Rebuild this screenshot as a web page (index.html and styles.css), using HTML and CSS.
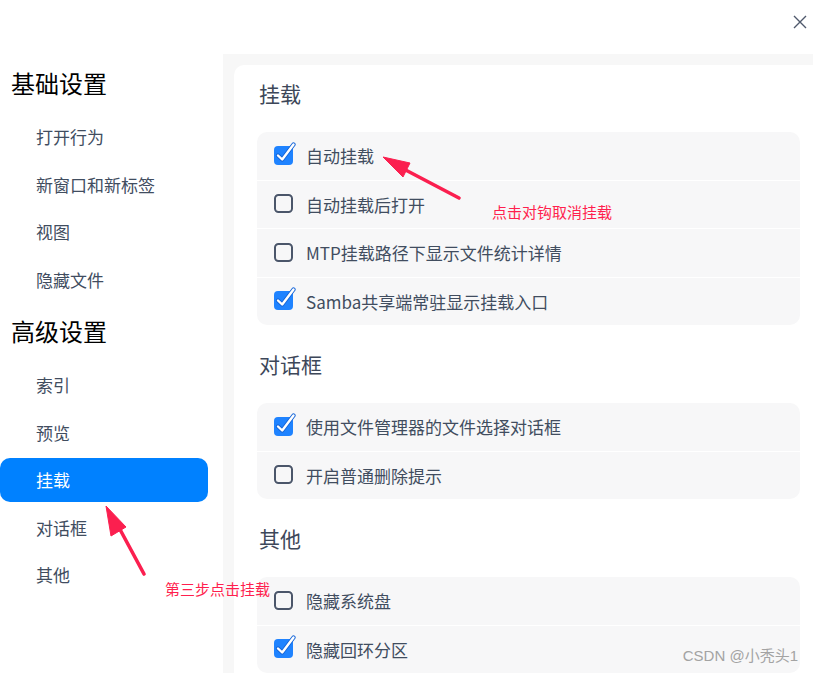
FILE: index.html
```html
<!DOCTYPE html>
<html lang="zh-CN">
<head>
<meta charset="utf-8">
<title>设置</title>
<link rel="stylesheet" href="styles.css">
</head>
<body>
<div class="window">
  <div class="titlebar">
    <button class="close" aria-label="关闭">
      <svg width="14" height="14" viewBox="0 0 14 14"><path d="M1 1 L13 13 M13 1 L1 13" stroke="#4f596c" stroke-width="1.4" fill="none"/></svg>
    </button>
  </div>
  <div class="content">
    <nav class="sidebar">
      <div class="nav-group">
        <div class="nav-title">基础设置</div>
        <div class="nav-items">
          <div class="nav-item">打开行为</div>
          <div class="nav-item">新窗口和新标签</div>
          <div class="nav-item">视图</div>
          <div class="nav-item">隐藏文件</div>
        </div>
      </div>
      <div class="nav-group">
        <div class="nav-title">高级设置</div>
        <div class="nav-items">
          <div class="nav-item">索引</div>
          <div class="nav-item">预览</div>
          <div class="nav-item active">挂载</div>
          <div class="nav-item">对话框</div>
          <div class="nav-item">其他</div>
        </div>
      </div>
    </nav>
    <main class="main">
      <div class="panel">
        <section class="section">
          <h2 class="section-title">挂载</h2>
          <div class="card">
            <div class="row"><span class="cb checked"><svg width="23" height="24" viewBox="0 0 23 24"><rect x="1" y="4" width="19" height="19" rx="4" fill="#1f83ff"/><path d="M5 13.5 L9.2 17.5 L20.5 2.5" stroke="#1565d8" stroke-width="4.2" fill="none" stroke-linecap="round" stroke-linejoin="round"/><path d="M5 13.5 L9.2 17.5 L20.5 2.5" stroke="#fff" stroke-width="2.4" fill="none" stroke-linecap="round" stroke-linejoin="round"/></svg></span><span class="label">自动挂载</span></div>
            <div class="row"><span class="cb"><svg width="23" height="24" viewBox="0 0 23 24"><rect x="2" y="5" width="17" height="17" rx="3.5" fill="none" stroke="#4b566a" stroke-width="2"/></svg></span><span class="label">自动挂载后打开</span></div>
            <div class="row"><span class="cb"><svg width="23" height="24" viewBox="0 0 23 24"><rect x="2" y="5" width="17" height="17" rx="3.5" fill="none" stroke="#4b566a" stroke-width="2"/></svg></span><span class="label">MTP挂载路径下显示文件统计详情</span></div>
            <div class="row"><span class="cb checked"><svg width="23" height="24" viewBox="0 0 23 24"><rect x="1" y="4" width="19" height="19" rx="4" fill="#1f83ff"/><path d="M5 13.5 L9.2 17.5 L20.5 2.5" stroke="#1565d8" stroke-width="4.2" fill="none" stroke-linecap="round" stroke-linejoin="round"/><path d="M5 13.5 L9.2 17.5 L20.5 2.5" stroke="#fff" stroke-width="2.4" fill="none" stroke-linecap="round" stroke-linejoin="round"/></svg></span><span class="label">Samba共享端常驻显示挂载入口</span></div>
          </div>
        </section>
        <section class="section">
          <h2 class="section-title">对话框</h2>
          <div class="card">
            <div class="row"><span class="cb checked"><svg width="23" height="24" viewBox="0 0 23 24"><rect x="1" y="4" width="19" height="19" rx="4" fill="#1f83ff"/><path d="M5 13.5 L9.2 17.5 L20.5 2.5" stroke="#1565d8" stroke-width="4.2" fill="none" stroke-linecap="round" stroke-linejoin="round"/><path d="M5 13.5 L9.2 17.5 L20.5 2.5" stroke="#fff" stroke-width="2.4" fill="none" stroke-linecap="round" stroke-linejoin="round"/></svg></span><span class="label">使用文件管理器的文件选择对话框</span></div>
            <div class="row"><span class="cb"><svg width="23" height="24" viewBox="0 0 23 24"><rect x="2" y="5" width="17" height="17" rx="3.5" fill="none" stroke="#4b566a" stroke-width="2"/></svg></span><span class="label">开启普通删除提示</span></div>
          </div>
        </section>
        <section class="section">
          <h2 class="section-title">其他</h2>
          <div class="card">
            <div class="row"><span class="cb"><svg width="23" height="24" viewBox="0 0 23 24"><rect x="2" y="5" width="17" height="17" rx="3.5" fill="none" stroke="#4b566a" stroke-width="2"/></svg></span><span class="label">隐藏系统盘</span></div>
            <div class="row"><span class="cb checked"><svg width="23" height="24" viewBox="0 0 23 24"><rect x="1" y="4" width="19" height="19" rx="4" fill="#1f83ff"/><path d="M5 13.5 L9.2 17.5 L20.5 2.5" stroke="#1565d8" stroke-width="4.2" fill="none" stroke-linecap="round" stroke-linejoin="round"/><path d="M5 13.5 L9.2 17.5 L20.5 2.5" stroke="#fff" stroke-width="2.4" fill="none" stroke-linecap="round" stroke-linejoin="round"/></svg></span><span class="label">隐藏回环分区</span></div>
          </div>
        </section>
      </div>
    </main>
  </div>

  <svg class="arrows" width="813" height="673" viewBox="0 0 813 673">
    <g fill="#fb1f4f" stroke="#fb1f4f">
      <line x1="459" y1="198" x2="398" y2="166" stroke-width="3.6" stroke-linecap="round"/>
      <polygon points="383,157 410,163 403,177" stroke-width="1" stroke-linejoin="round"/>
      <line x1="144" y1="574" x2="116" y2="522" stroke-width="3.6" stroke-linecap="round"/>
      <polygon points="106,506 126,527 111,536" stroke-width="1" stroke-linejoin="round"/>
    </g>
  </svg>
  <div class="note note-1">点击对钩取消挂载</div>
  <div class="note note-2">第三步点击挂载</div>
  <div class="watermark">CSDN @小秃头1</div>
</div>
</body>
</html>
```

FILE: styles.css
```css
* { box-sizing: border-box; }
html, body { margin: 0; padding: 0; background: #fff; }
body {
  font-family: "Noto Sans CJK SC", "Noto Sans", sans-serif;
  color: #414d5f;
}
.window {
  position: relative;
  width: 813px;
  height: 673px;
  overflow: hidden;
  display: flex;
  flex-direction: column;
  background: #fff;
}
.titlebar {
  height: 54px;
  flex: none;
  display: flex;
  justify-content: flex-end;
  align-items: flex-start;
}
.close {
  width: 20px;
  height: 44px;
  padding: 0;
  margin: 0 3px 0 0;
  border: 0;
  background: transparent;
  display: flex;
  align-items: center;
  justify-content: center;
}
.close svg { display: block; }
.content {
  flex: 1;
  display: flex;
  min-height: 0;
}
.sidebar {
  width: 223px;
  flex: none;
  padding-top: 6px;
  display: flex;
  flex-direction: column;
}
.nav-group { margin-bottom: 6.5px; }
.nav-title {
  height: 50px;
  line-height: 46px;
  padding-left: 11px;
  font-size: 24px;
  color: #000;
  margin-bottom: 5px;
}
.nav-items {
  display: flex;
  flex-direction: column;
  gap: 3.5px;
}
.nav-item {
  height: 44px;
  line-height: 44px;
  width: 208px;
  padding-left: 36px;
  font-size: 17px;
  color: #414d5f;
  border-radius: 10px;
}
.nav-item.active {
  background: #0081ff;
  color: #fff;
}
.main {
  flex: 1;
  background: #f7f7f7;
  padding: 11px 0 0 11px;
  min-width: 0;
}
.panel {
  height: 100%;
  background: #fff;
  border-top-left-radius: 10px;
  padding: 0 13px 0 23px;
  overflow: hidden;
}
.section { margin-bottom: 11px; }
.section-title {
  margin: 0;
  padding: 10px 0 21px 2px;
  line-height: 36px;
  font-size: 21px;
  font-weight: normal;
  color: #3d4759;
}
.card {
  display: flex;
  flex-direction: column;
  gap: 1px;
  border-radius: 10px;
  overflow: hidden;
}
.row {
  height: 47.5px;
  background: #f7f7f8;
  display: flex;
  align-items: center;
  padding-left: 16px;
}
.cb {
  width: 23px;
  height: 24px;
  flex: none;
  margin-top: -4px;
  margin-right: 10px;
}
.cb svg { display: block; }
.label {
  font-size: 17px;
  color: #414d5f;
}
.arrows {
  position: absolute;
  left: 0;
  top: 0;
  pointer-events: none;
}
.note {
  position: absolute;
  font-size: 15px;
  line-height: 20px;
  color: #ff1f4e;
}
.note-1 { left: 492px; top: 202px; }
.note-2 { left: 165px; top: 579px; }
.watermark {
  position: absolute;
  right: 15px;
  top: 645px;
  font-family: "Liberation Sans", "Noto Sans CJK SC", sans-serif;
  font-size: 15px;
  line-height: 22px;
  color: #a3a3a3;
}
```
